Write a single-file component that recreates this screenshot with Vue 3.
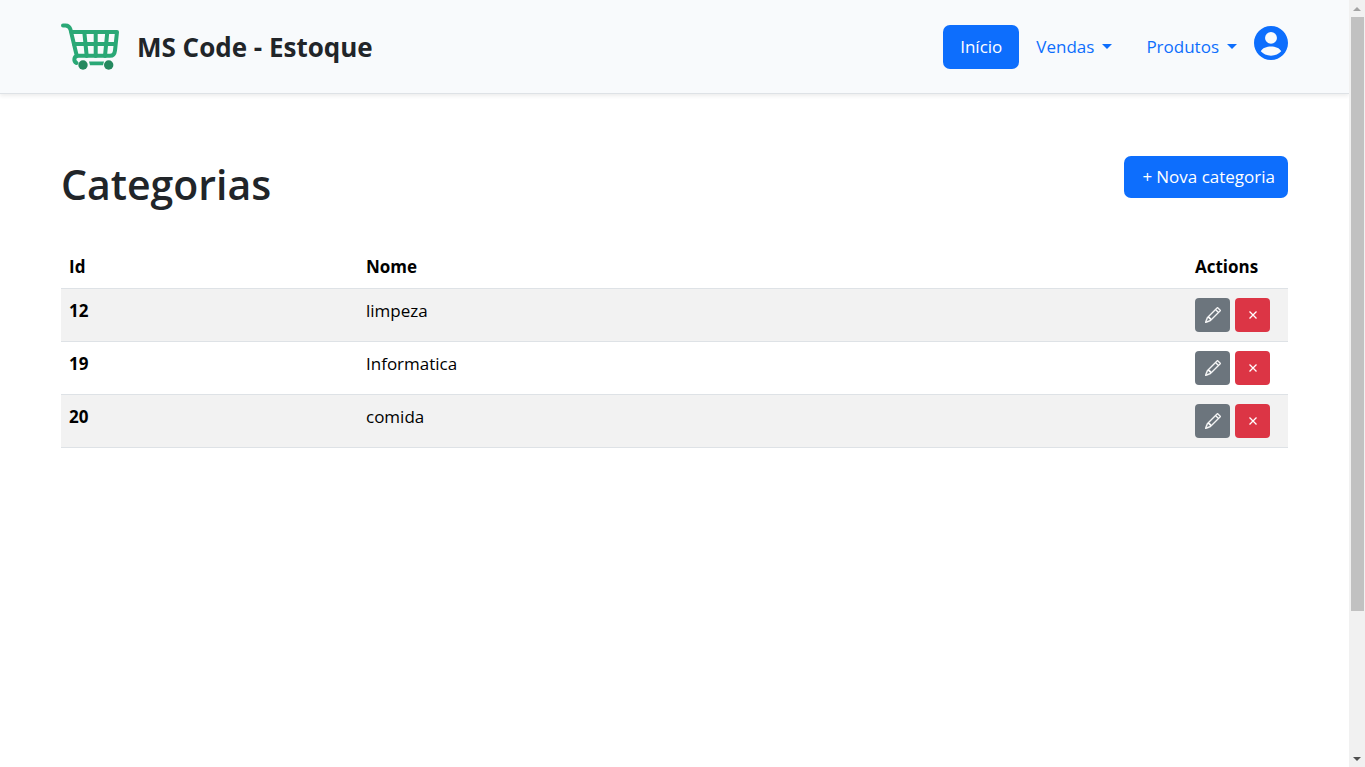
<script setup>
const categories = [
  { id: 12, name: 'limpeza' },
  { id: 19, name: 'Informatica' },
  { id: 20, name: 'comida' },
]
</script>

<template>
  <div class="window">
    <div class="page">
      <header class="topbar">
        <a class="brand" href="#">
          <svg class="cart" viewBox="0 0 58 48" fill="none" aria-hidden="true">
            <g stroke="#2aa876" stroke-width="4" stroke-linecap="round" stroke-linejoin="round">
              <path d="M2 2.400h2.500c3 0 4.300 1.600 5 4.200L15.800 33c-2.800 1-3.600 5-.3 7" />
              <path d="M10.500 9H56l-2 18.500c-.4 3.800-2 5.300-5 5.300H16" />
              <path d="M13 20.900h41" />
              <path d="M23.300 9l2.400 24M34.700 9v24M46.300 9l-2.300 24" />
            </g>
            <path d="M28 38.500h15l-1 3.700H29z" fill="#2aa876" />
            <circle cx="22" cy="42" r="4.700" fill="#25895f" />
            <circle cx="47.700" cy="42" r="4.700" fill="#25895f" />
          </svg>
          <span>MS Code - Estoque</span>
        </a>
        <nav class="nav">
          <a class="link active" href="#">Início</a>
          <button class="link drop" type="button">Vendas</button>
          <button class="link drop" type="button">Produtos</button>
          <button class="account" type="button" aria-label="Conta">
            <svg viewBox="2 2 20 20" aria-hidden="true">
              <path fill="#0d6efd" d="M12 2C6.480 2 2 6.480 2 12s4.480 10 10 10 10-4.480 10-10S17.520 2 12 2m0 3.500a3.500 3.500 0 0 1 0 7 3.500 3.500 0 0 1 0-7m0 14c-2.500 0-4.600-1-6-2.600C6.800 15 9.500 14.100 12 14.100s5.200.9 6 2.800C16.600 18.500 14.500 19.500 12 19.500" />
            </svg>
          </button>
        </nav>
      </header>

      <main class="content">
        <div class="heading">
          <h1>Categorias</h1>
          <button class="create" type="button"><span class="plus">+</span>Nova categoria</button>
        </div>
        <table>
          <thead>
            <tr>
              <th class="col-id" scope="col">Id</th>
              <th scope="col">Nome</th>
              <th class="col-actions" scope="col">Actions</th>
            </tr>
          </thead>
          <tbody>
            <tr v-for="item in categories" :key="item.id">
              <th scope="row">{{ item.id }}</th>
              <td>{{ item.name }}</td>
              <td>
                <div class="actions">
                  <button class="action edit" type="button" :aria-label="'Editar ' + item.name">
                    <svg viewBox="0 0 16 16" fill="currentColor" stroke="currentColor" stroke-width="0.400" aria-hidden="true">
                      <path d="M12.146.146a.5.5 0 0 1 .708 0l3 3a.5.5 0 0 1 0 .708l-10 10a.5.5 0 0 1-.168.110l-5 2a.5.5 0 0 1-.650-.650l2-5a.5.5 0 0 1 .110-.168zM11.207 2.500 13.500 4.793 14.793 3.500 12.500 1.207zm1.586 3L10.500 3.207 4 9.707V10h.5a.5.5 0 0 1 .5.5v.5h.5a.5.5 0 0 1 .5.5v.5h.293zm-9.761 5.175-.106.106-1.528 3.821 3.821-1.528.106-.106A.5.5 0 0 1 5 12.500V12h-.5a.5.5 0 0 1-.5-.5V11h-.5a.5.5 0 0 1-.468-.325" />
                    </svg>
                  </button>
                  <button class="action remove" type="button" :aria-label="'Excluir ' + item.name">
                    <svg viewBox="0 0 16 16" aria-hidden="true">
                      <path d="M4.500 4.500l7 7M11.500 4.500l-7 7" fill="none" stroke="currentColor" stroke-width="1.300" />
                    </svg>
                  </button>
                </div>
              </td>
            </tr>
          </tbody>
        </table>
      </main>
    </div>

    <div class="scrollbar" aria-hidden="true">
      <svg class="arrow" viewBox="0 0 16 17"><path d="M4 11h8L8 7z" fill="#a3a3a3" /></svg>
      <div class="track"><div class="thumb"></div></div>
      <svg class="arrow" viewBox="0 0 16 17"><path d="M4 7h8l-4 4z" fill="#505050" /></svg>
    </div>
  </div>
</template>

<style>
body {
  margin: 0;
  background: #fff;
}
</style>

<style scoped>
.window {
  display: flex;
  min-height: 100vh;
  font-family: "Open Sans", "Noto Sans", sans-serif;
  font-size: 17px;
  line-height: 26px;
  color: #212529;
}
.page {
  flex: 1;
  min-width: 0;
}
button {
  font: inherit;
  border: 0;
  cursor: pointer;
}
a {
  text-decoration: none;
}
svg {
  display: block;
}
.topbar {
  display: flex;
  align-items: center;
  justify-content: space-between;
  height: 93px;
  padding: 0 61px;
  background: #f8fafc;
  border-bottom: 1px solid #dee2e6;
  box-shadow: 0 2px 4px rgba(0, 0, 0, 0.075);
}
.brand {
  display: flex;
  align-items: center;
  gap: 18px;
  font-size: 26px;
  font-weight: 700;
  color: #212529;
}
.cart {
  width: 58px;
  height: 48px;
}
.nav {
  display: flex;
  align-items: flex-start;
}
.link {
  display: flex;
  align-items: center;
  height: 44px;
  padding: 0 17px;
  border-radius: 7px;
  background: none;
  color: #0d6efd;
}
.active {
  background: #0d6efd;
  color: #fff;
}
.drop::after {
  content: "";
  margin-left: 8px;
  border: 5px solid transparent;
  border-top-color: currentColor;
  border-bottom: 0;
}
.account {
  padding: 1px 0;
  background: none;
}
.account svg {
  width: 34px;
  height: 34px;
}
.content {
  padding: 62px 61px;
}
.heading {
  display: flex;
  align-items: flex-start;
  justify-content: space-between;
  margin-bottom: 35px;
}
h1 {
  margin: 0;
  font-size: 41px;
  line-height: 56px;
  font-weight: 600;
}
.create {
  height: 42px;
  padding: 0 13px 0 19px;
  border-radius: 7px;
  background: #0d6efd;
  color: #fff;
}
.plus {
  margin-right: 4px;
}
table {
  width: 100%;
  border-collapse: collapse;
  table-layout: fixed;
  color: #000;
}
th,
td {
  padding: 9px 8px;
  border-bottom: 1px solid #dee2e6;
  text-align: left;
  vertical-align: top;
}
thead th {
  padding: 7px 8px 8px;
}
.col-id {
  width: 281px;
}
.col-actions {
  width: 85px;
}
tbody tr:nth-child(odd) {
  background: #f2f2f2;
}
.actions {
  display: flex;
  gap: 5px;
}
.action {
  display: flex;
  align-items: center;
  justify-content: center;
  width: 35px;
  height: 34px;
  padding: 0;
  border-radius: 4px;
  color: #fff;
}
.action svg {
  width: 16px;
  height: 16px;
}
.edit {
  background: #6c757d;
}
.remove {
  background: #dc3545;
}
.scrollbar {
  position: sticky;
  top: 0;
  display: flex;
  flex-direction: column;
  width: 16px;
  height: 100vh;
  background: #f1f1f1;
}
.arrow {
  width: 16px;
  height: 17px;
}
.track {
  flex: 1;
  padding: 0 1px 0 2px;
}
.thumb {
  height: 81%;
  background: #c1c1c1;
}
</style>
